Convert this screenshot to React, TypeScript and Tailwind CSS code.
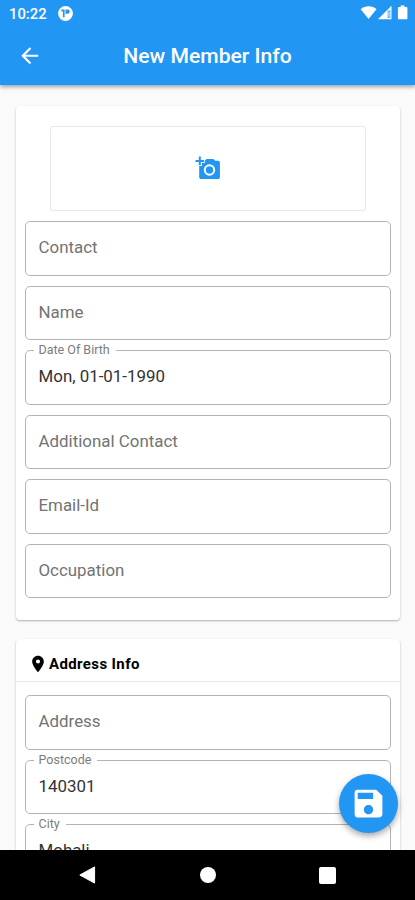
import { MdArrowBack, MdLocationOn, MdSave } from 'react-icons/md';

interface FieldProps {
  label: string;
  value?: string;
}

const memberFields: FieldProps[] = [
  { label: 'Contact' },
  { label: 'Name' },
  { label: 'Date Of Birth', value: 'Mon, 01-01-1990' },
  { label: 'Additional Contact' },
  { label: 'Email-Id' },
  { label: 'Occupation' },
];

const addressFields: FieldProps[] = [
  { label: 'Address' },
  { label: 'Postcode', value: '140301' },
  { label: 'City', value: 'Mohali' },
];

function Field({ label, value }: FieldProps) {
  return (
    <div className="relative flex h-[54.5px] shrink-0 items-center rounded-[5px] border border-[#b4b4b4] pb-[2px] pl-[12.5px] text-[16.9px] leading-5">
      {value && (
        <span className="absolute -top-[9px] left-2 bg-white pr-[6px] pl-[4.5px] text-[12.5px] leading-4 text-[#7c7c7c]">
          {label}
        </span>
      )}
      {value ? (
        <span className="text-[#333333]">{value}</span>
      ) : (
        <span className="text-[#737373]">{label}</span>
      )}
    </div>
  );
}

function AddPhotoIcon() {
  return (
    <svg className="h-[24px] w-[26px]" viewBox="0 0 26 24">
      <path
        d="M6 4.8h3.8L11.6 3h6.8l1.8 1.8h2.9c1 0 1.8.8 1.8 1.8v14.6c0 1-.8 1.8-1.8 1.8H6c-1 0-1.8-.8-1.8-1.8V6.6c0-1 .8-1.8 1.8-1.8z"
        fill="#2196f3"
      />
      <path d="M4.8 0v10M0 5h9.8" stroke="#fff" strokeWidth="4" />
      <path d="M4.8 0.6v8.6M0.5 4.9h8.6" stroke="#2196f3" strokeWidth="2" />
      <circle cx="14.5" cy="14" r="4.7" fill="#2196f3" stroke="#fff" strokeWidth="2" />
    </svg>
  );
}

function StatusBar() {
  return (
    <div className="flex h-[26px] items-center justify-between pt-[2px] pr-[7px] pl-[9px]">
      <div className="flex items-center gap-[11px]">
        <span className="text-[14.8px] leading-4 font-medium">10:22</span>
        <svg className="mb-[1px] h-[15px] w-[15px]" viewBox="0 0 15 15">
          <circle cx="7.5" cy="7.5" r="7.4" fill="#fff" />
          <path d="M3.4 3.6h3.2v7.6H4.9V5.5H3.4z" fill="#2196f3" />
          <path d="M7.5 3.6h2.2a2 2 0 0 1 0 4.1H7.5z" fill="#2196f3" />
        </svg>
      </div>
      <svg className="mb-[1.5px] h-[16px] w-[48px]" viewBox="0 0 48 16" fill="#fff">
        <path d="M0.7 4.2C5.2 0.4 12 0.4 16.5 4.2L8.6 14z" />
        <path d="M31.5 0.8V14.2H17.9z" />
        <path d="M27.6 5.4h2.8v7.6h-2.8z" fill="#2196f3" fillOpacity="0.75" />
        <path d="M28.6 6.8h.8v5h-.8z" />
        <path d="M40.7 0.6h3.8v1.5h2c.5 0 .9.4.9.9v10.4c0 .5-.4.9-.9.9h-7.7a.9.9 0 0 1-.9-.9V3c0-.5.4-.9.9-.9h1.9z" />
      </svg>
    </div>
  );
}

function NavigationBar() {
  return (
    <div className="z-20 flex h-[50px] shrink-0 items-center justify-between bg-black px-[79px]">
      <svg className="h-[18px] w-[17px]" viewBox="0 0 17 18">
        <path d="M15.6 0.9v16.2L0.8 9z" fill="#fff" stroke="#fff" strokeLinejoin="round" />
      </svg>
      <div className="h-4 w-4 rounded-full bg-white" />
      <div className="h-[17px] w-[17px] rounded-[2px] bg-white" />
    </div>
  );
}

export default function App() {
  return (
    <div className="relative flex h-[900px] w-[415px] flex-col overflow-hidden bg-[#fafafa] font-['Roboto',sans-serif]">
      <header className="z-10 h-[84.5px] shrink-0 bg-[#2196f3] text-white shadow-[0_2px_4px_rgba(0,0,0,0.35)]">
        <StatusBar />
        <div className="grid h-[59px] grid-cols-[60px_1fr_60px] items-center">
          <MdArrowBack className="ml-[17px] h-[25.5px] w-[25.5px]" />
          <h1 className="text-center text-[21.1px] leading-6 font-medium">New Member Info</h1>
        </div>
      </header>

      <main className="flex min-h-0 flex-1 flex-col gap-[18.5px] overflow-hidden px-4 pt-[21px]">
        <section className="flex h-[514.5px] w-96 shrink-0 flex-col gap-[10px] rounded bg-white px-[9px] pt-5 shadow-[0_1px_2px_rgba(0,0,0,0.3)]">
          <div className="mx-[25px] mb-[0.6px] flex h-[85px] shrink-0 items-center justify-center rounded-[3px] border border-[#e8e8e8]">
            <AddPhotoIcon />
          </div>
          {memberFields.map((field) => (
            <Field key={field.label} {...field} />
          ))}
        </section>

        <section className="w-96 shrink-0 rounded bg-white shadow-[0_1px_2px_rgba(0,0,0,0.3)]">
          <div className="flex h-[43px] items-center border-b border-[#e8e8e8] pt-2 pl-[11.5px]">
            <MdLocationOn className="h-5 w-5 text-black" />
            <h2 className="ml-[1.5px] text-[15px] leading-5 font-bold tracking-[0.38px] text-black">
              Address Info
            </h2>
          </div>
          <div className="flex flex-col gap-[10px] px-[9px] pt-[13.5px] pb-5">
            {addressFields.map((field) => (
              <Field key={field.label} {...field} />
            ))}
          </div>
        </section>
      </main>

      <button
        type="button"
        aria-label="Save member"
        className="absolute top-[773.5px] left-[339px] z-10 flex h-[59px] w-[59px] items-center justify-center rounded-full bg-[#2196f3] text-white shadow-[0_3px_6px_rgba(0,0,0,0.35)]"
      >
        <MdSave className="h-[37px] w-[37px]" />
      </button>

      <NavigationBar />
    </div>
  );
}
